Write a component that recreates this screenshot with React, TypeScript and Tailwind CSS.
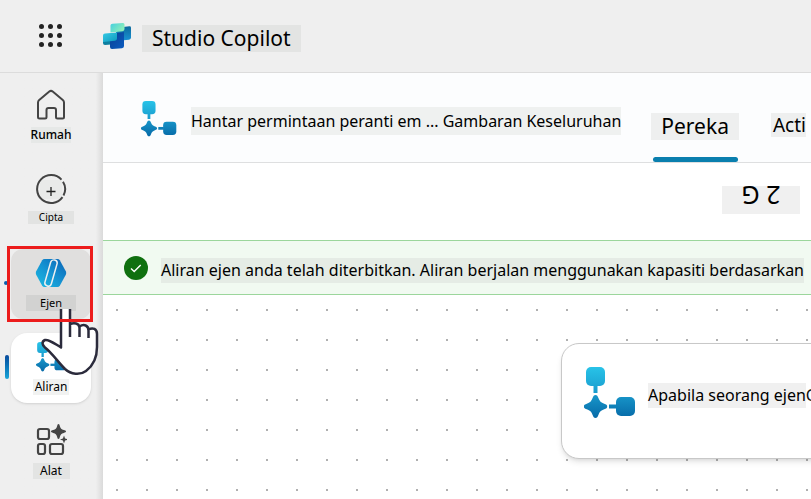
import type { ReactNode } from "react";

function FlowIcon({ id, className }: { id: string; className?: string }) {
  return (
    <svg viewBox="0 0 52 52" className={className} aria-hidden="true">
      <defs>
        <linearGradient id={id} x1="0" y1="0" x2="0" y2="52" gradientUnits="userSpaceOnUse">
          <stop offset="0" stopColor="#28c3e8" />
          <stop offset="0.45" stopColor="#1b9fd0" />
          <stop offset="1" stopColor="#0668a6" />
        </linearGradient>
      </defs>
      <g fill={`url(#${id})`}>
        <rect x="2" y="0" width="19" height="19" rx="5" />
        <rect x="9.5" y="18" width="4" height="8" />
        <path d="M11.500 28c1.500 0 2.200 1 2.900 3 1.200 3.200 2.600 4.600 5.800 5.700 2 .7 3 1.300 3 2.800s-1 2.100-3 2.800c-3.200 1.100-4.600 2.500-5.800 5.700-.7 2-1.400 3-2.900 3s-2.200-1-2.900-3c-1.200-3.200-2.600-4.600-5.800-5.700-2-.7-3-1.300-3-2.800s1-2.100 3-2.800c3.200-1.100 4.600-2.500 5.800-5.700.7-2 1.400-3 2.900-3z" />
        <rect x="25" y="37.500" width="8" height="4" />
        <rect x="32" y="30" width="19" height="19" rx="5" />
      </g>
    </svg>
  );
}

function CopilotLogo() {
  return (
    <svg viewBox="0 0 28 26" className="h-[26px] w-7" aria-hidden="true">
      <defs>
        <linearGradient id="lg-top" x1="0" y1="0" x2="1" y2="0.6">
          <stop offset="0" stopColor="#45cfe0" />
          <stop offset="1" stopColor="#8ff0b8" />
        </linearGradient>
        <linearGradient id="lg-left" x1="0" y1="0" x2="1" y2="1">
          <stop offset="0" stopColor="#38cbe6" />
          <stop offset="1" stopColor="#0c98bd" />
        </linearGradient>
        <linearGradient id="lg-right" x1="0" y1="0" x2="0" y2="1">
          <stop offset="0" stopColor="#0d6a9c" />
          <stop offset="1" stopColor="#1a94d6" />
        </linearGradient>
        <linearGradient id="lg-base" x1="0" y1="0" x2="1" y2="1">
          <stop offset="0" stopColor="#0a3f93" />
          <stop offset="1" stopColor="#0a5cc0" />
        </linearGradient>
      </defs>
      <path d="M20 4l6.500-.8q1.500 0 1.500 1.300v10q0 2-2 2.200L13 18V9z" fill="url(#lg-right)" />
      <path d="M0 17l8-1v5.500l-6 .5q-2 0-2-2z" fill="#0d7fa0" />
      <path d="M7 11l14-2v14q0 2-2 2.200l-10 .8q-2 0-2-2z" fill="url(#lg-base)" />
      <path d="M2 10.500l12-1v6q0 2-2 2.200L0 19v-6.500q0-2 2-2z" fill="url(#lg-left)" />
      <path d="M9.500.8l10.500-.8q1.500 0 1.500 1.500V6q0 2-2 2.200L7.500 9.500V2.500Q7.500 1 9.500.8z" fill="url(#lg-top)" />
    </svg>
  );
}

function HomeIcon() {
  return (
    <svg viewBox="0 0 30 32" className="h-8 w-[30px]" fill="none" stroke="#444" strokeWidth="2" strokeLinejoin="round" aria-hidden="true">
      <path d="M2 13.500q0-1.500 1.200-2.500L13.300 2.600q1.700-1.400 3.400 0L26.800 11q1.200 1 1.200 2.500V28q0 1.500-1.500 1.500h-5Q20 29.500 20 28v-7q0-2-2-2h-5.500q-2 0-2 2v7q0 1.500-1.500 1.500H3.500Q2 29.500 2 28z" />
    </svg>
  );
}

function CreateIcon() {
  return (
    <svg viewBox="0 0 32 32" className="size-8" fill="none" aria-hidden="true">
      <path d="M5 7h22v19H5z" fill="#e9eae9" />
      <path d="M27.500 24.200A14 14 0 1 1 26.500 6.700M28 8.700A14 14 0 0 1 28.500 22.500" stroke="#444" strokeWidth="2" />
      <path d="M11.500 18.500h9M16 14v9" stroke="#222" strokeWidth="1.300" />
    </svg>
  );
}

function AgentIcon() {
  return (
    <svg viewBox="0 0 32 28" className="h-7 w-8" aria-hidden="true">
      <defs>
        <linearGradient id="agent" x1="1" y1="0" x2="0" y2="1">
          <stop offset="0" stopColor="#0a62b4" />
          <stop offset="0.500" stopColor="#1592d2" />
          <stop offset="1" stopColor="#1cbce2" />
        </linearGradient>
      </defs>
      <path d="M9.500 0h13q1.500 0 2.300 1.300l6 11q.9 1.700 0 3.400l-6 11Q24 28 22.500 28h-13Q8 28 7.200 26.700l-6-11q-.9-1.700 0-3.400l6-11Q8 0 9.500 0z" fill="url(#agent)" />
      <rect x="12.700" y="0.500" width="6.600" height="27" rx="3.300" transform="rotate(16 16 14)" stroke="#f0f0f0" strokeWidth="1.500" fill="none" />
    </svg>
  );
}

function ToolsIcon() {
  return (
    <svg viewBox="0 0 32 34" className="h-[34px] w-8" fill="none" stroke="#444" strokeWidth="2.200" aria-hidden="true">
      <rect x="3" y="5" width="11" height="10" rx="2" />
      <rect x="3" y="20" width="7" height="10" rx="2" />
      <rect x="15" y="20" width="13" height="10" rx="2" />
      <path d="M23.500 0c.8 0 1 .8 1.400 2.200.8 2.600 1.300 3.100 3.900 3.900 1.400.4 2.200.6 2.200 1.400s-.8 1-2.200 1.400c-2.600.8-3.100 1.300-3.900 3.900-.4 1.400-.6 2.200-1.400 2.200s-1-.8-1.400-2.200c-.8-2.600-1.300-3.100-3.900-3.900-1.400-.4-2.200-.6-2.200-1.400s.8-1 2.200-1.400c2.600-.8 3.100-1.300 3.900-3.900.4-1.400.6-2.200 1.400-2.200z" fill="#444" stroke="none" />
      <path d="M29 11.500l1.100 2.900 2.900 1.100-2.900 1.100-1.100 2.900-1.100-2.900-2.900-1.100 2.900-1.100z" fill="#444" stroke="none" />
    </svg>
  );
}

function HandPointer() {
  return (
    <svg viewBox="0 0 60 68" className="pointer-events-none absolute top-[60px] left-[29px] z-10 h-[68px] w-[60px]" fill="none" aria-hidden="true">
      <path
        d="M21 0V38.500C15 35 9 30 5 31 1.500 32.500 2 36 5 38.500 12 44 18 53 25 60 31 65.500 40 66.500 46 62 54 56 57 46 57 38V25C57 20 53 18 48.500 20.500 48 16.500 44 14.500 39.500 17.500 38 14 34 13.500 30 15V0z"
        fill="#fff"
      />
      <path
        d="M30 0V28M30 15c4-1.500 9-1 9.500 3.500V28M39.500 17.500c4.500-3 9-1 9 4V29M48.500 20.500c4.500-2.500 8.500-.5 8.500 4.500V38c0 8-3 18-11 24-6 4.500-15 3.500-21-2C18 53 12 44 5 38.500c-3-2.500-3.500-6 0-7.500 4-1 10 4 16 7.500V0"
        stroke="#2b2b3c"
        strokeWidth="2.500"
        strokeLinejoin="round"
      />
    </svg>
  );
}

interface NavItemProps {
  icon: ReactNode;
  label: string;
  className?: string;
  labelClass: string;
  children?: ReactNode;
}

function NavItem({ icon, label, className, labelClass, children }: NavItemProps) {
  return (
    <li className="relative">
      <a href="#" className={`flex h-[70px] w-20 flex-col items-center ${className ?? ""}`}>
        <span className="flex h-[46px] items-center pt-0.5">{icon}</span>
        <span className={`flex items-center justify-center ${labelClass}`}>{label}</span>
      </a>
      {children}
    </li>
  );
}

export default function App() {
  return (
    <div className="flex h-screen flex-col overflow-hidden bg-[#efefef] font-['Noto_Sans',sans-serif] text-black">
      <header className="flex h-[73px] shrink-0 items-center border-b border-[#dcdcdc] pl-[39px]">
        <button type="button" aria-label="Apps" className="grid grid-cols-3 gap-1 pb-0.5">
          {Array.from({ length: 9 }, (_, i) => (
            <span key={i} className="size-[5px] rounded-full bg-[#222]" />
          ))}
        </button>
        <div className="ml-[41px] flex items-center gap-[11px] pt-1">
          <div className="pb-1">
            <CopilotLogo />
          </div>
          <h1 className="bg-[#e3e4e3] px-2.5 text-[21px] leading-[27px]">Studio Copilot</h1>
        </div>
      </header>

      <div className="flex min-h-0 flex-1">
        <nav className="w-[103px] shrink-0 bg-linear-to-r from-[#efefef] from-93% to-[#dadada] pt-2 pl-[11px]">
          <ul className="flex flex-col gap-3.5">
            <NavItem icon={<HomeIcon />} label="Rumah" labelClass="h-4 bg-[#e6e8e7] text-xs font-medium" />
            <NavItem icon={<CreateIcon />} label="Cipta" labelClass="h-[13px] w-[46px] bg-[#e2e3e2] text-[10px]" />
            <NavItem icon={<AgentIcon />} label="Ejen" className="rounded-xl bg-[#e0dfde]" labelClass="h-4 w-[50px] bg-[#d2d2d1] text-[11px]">
              <span className="absolute top-8 -left-[7px] size-1 rounded-full bg-[#0a5fae]" />
              <HandPointer />
              <span className="absolute -top-[3px] -left-1 z-20 h-[76px] w-[86px] border-3 border-[#ec1c1c]" />
            </NavItem>
            <NavItem icon={<FlowIcon id="flow-nav" className="size-[30px]" />} label="Aliran" className="rounded-2xl bg-white shadow-sm" labelClass="h-4 bg-[#f1f2f1] px-0.5 text-xs">
              <span className="absolute top-[22px] -left-1.5 h-6 w-1 rounded-full bg-linear-to-b from-[#0a4a9c] to-[#1aa5d8]" />
            </NavItem>
            <NavItem icon={<ToolsIcon />} label="Alat" labelClass="h-4 w-[37px] bg-[#e3e4e3] text-xs" />
          </ul>
        </nav>

        <main className="flex min-w-0 flex-1 flex-col bg-white">
          <div className="flex h-[90px] shrink-0 items-stretch overflow-hidden border-b border-[#dedfe0] bg-[#fcfdfe] pl-[38px] whitespace-nowrap">
            <FlowIcon id="flow-title" className="mt-7 size-9 shrink-0" />
            <h2 className="mt-[34px] ml-3.5 h-7 shrink-0 bg-[#eff1f0] text-base leading-7">
              Hantar permintaan peranti em ... Gambaran Keseluruhan
            </h2>
            <div className="ml-[30px] flex shrink-0 gap-8">
              <a href="#" className="flex flex-col items-center justify-between pt-10">
                <span className="bg-[#eeefef] px-2.5 text-[21px] leading-[27px]">Pereka</span>
                <span className="h-[5px] w-[85px] rounded-full bg-[#0a7fae]" />
              </a>
              <a href="#" className="pt-10">
                <span className="block bg-[#eeefef] pl-0.5 text-[19px] leading-6">Acti</span>
              </a>
            </div>
          </div>

          <div className="flex h-[77px] shrink-0 items-center justify-end pr-[11px] pb-1">
            <span className="h-7 w-[78px] rotate-180 bg-[#f0f0f0] text-center text-[25px] leading-9">2 G</span>
          </div>

          <div role="status" className="flex h-[55px] shrink-0 items-center gap-[13px] overflow-hidden border-y border-[#9bd69c] bg-[#f1faf1] pl-[21px] whitespace-nowrap">
            <svg viewBox="0 0 24 24" className="size-6 shrink-0" aria-hidden="true">
              <circle cx="12" cy="12" r="12" fill="#0f700f" />
              <path d="M7 12.500l3.200 3 6.500-6.500" fill="none" stroke="#fff" strokeWidth="1.400" />
            </svg>
            <p className="mt-1.5 bg-[#e5ece5] text-base leading-[25px]">
              Aliran ejen anda telah diterbitkan. Aliran berjalan menggunakan kapasiti berdasarkan
            </p>
          </div>

          <div className="relative flex-1 overflow-hidden bg-[radial-gradient(circle_at_14px_15px,#b0b0b0_1px,transparent_1px)] bg-size-[30px_30px]">
            <div className="absolute top-12 -right-10 left-[458px] flex h-[116px] items-center rounded-[18px] border border-[#c8c8c8] bg-white pl-[22px] whitespace-nowrap shadow-md">
              <FlowIcon id="flow-card" className="-mt-4 size-[52px] shrink-0" />
              <p className="-mt-3 ml-3 bg-[#f0f0f0] text-base leading-[25px]">Apabila seorang ejen</p>
              <span className="-mt-3 text-base text-[#111]">C</span>
            </div>
          </div>
        </main>
      </div>
    </div>
  );
}
